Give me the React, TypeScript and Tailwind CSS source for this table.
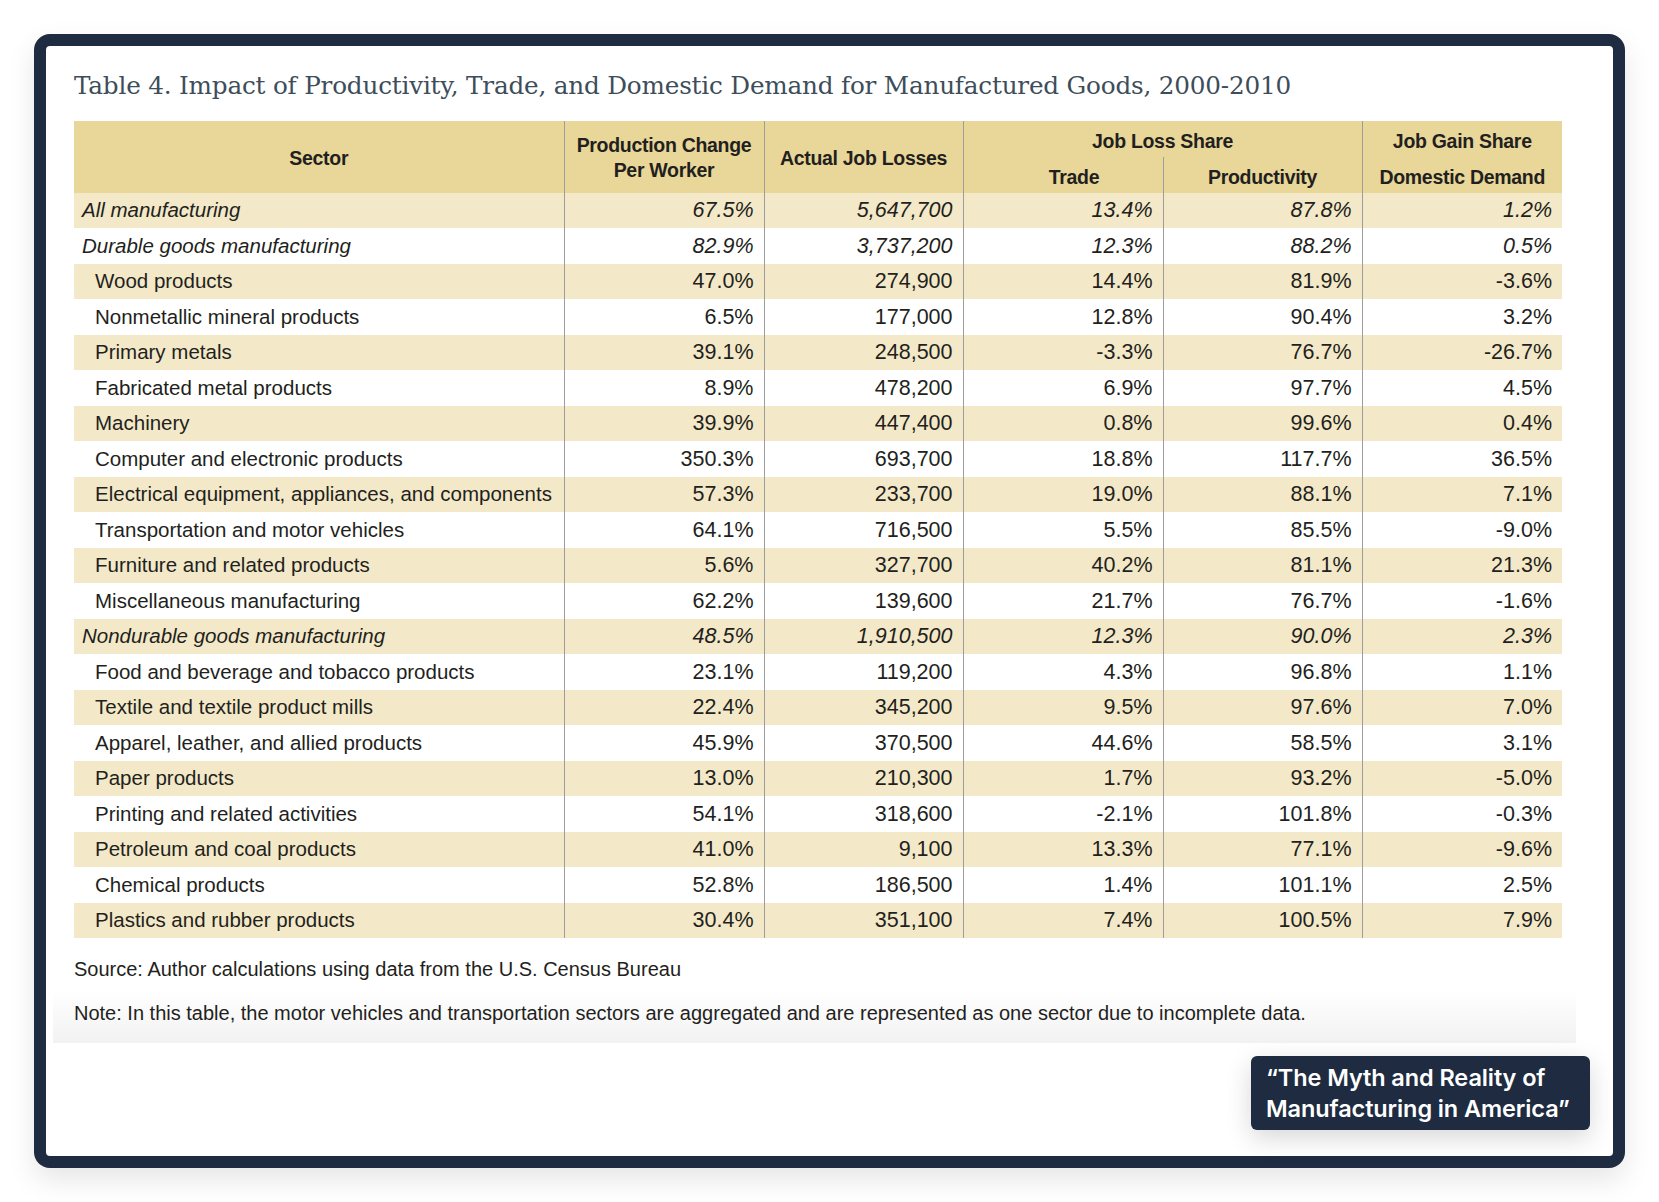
import React from 'react';

type Row = {
  sector: string;
  values: string[];
  group?: boolean;
};

const rows: Row[] = [
  { sector: 'All manufacturing', values: ['67.5%', '5,647,700', '13.4%', '87.8%', '1.2%'], group: true },
  { sector: 'Durable goods manufacturing', values: ['82.9%', '3,737,200', '12.3%', '88.2%', '0.5%'], group: true },
  { sector: 'Wood products', values: ['47.0%', '274,900', '14.4%', '81.9%', '-3.6%'] },
  { sector: 'Nonmetallic mineral products', values: ['6.5%', '177,000', '12.8%', '90.4%', '3.2%'] },
  { sector: 'Primary metals', values: ['39.1%', '248,500', '-3.3%', '76.7%', '-26.7%'] },
  { sector: 'Fabricated metal products', values: ['8.9%', '478,200', '6.9%', '97.7%', '4.5%'] },
  { sector: 'Machinery', values: ['39.9%', '447,400', '0.8%', '99.6%', '0.4%'] },
  { sector: 'Computer and electronic products', values: ['350.3%', '693,700', '18.8%', '117.7%', '36.5%'] },
  { sector: 'Electrical equipment, appliances, and components', values: ['57.3%', '233,700', '19.0%', '88.1%', '7.1%'] },
  { sector: 'Transportation and motor vehicles', values: ['64.1%', '716,500', '5.5%', '85.5%', '-9.0%'] },
  { sector: 'Furniture and related products', values: ['5.6%', '327,700', '40.2%', '81.1%', '21.3%'] },
  { sector: 'Miscellaneous manufacturing', values: ['62.2%', '139,600', '21.7%', '76.7%', '-1.6%'] },
  { sector: 'Nondurable goods manufacturing', values: ['48.5%', '1,910,500', '12.3%', '90.0%', '2.3%'], group: true },
  { sector: 'Food and beverage and tobacco products', values: ['23.1%', '119,200', '4.3%', '96.8%', '1.1%'] },
  { sector: 'Textile and textile product mills', values: ['22.4%', '345,200', '9.5%', '97.6%', '7.0%'] },
  { sector: 'Apparel, leather, and allied products', values: ['45.9%', '370,500', '44.6%', '58.5%', '3.1%'] },
  { sector: 'Paper products', values: ['13.0%', '210,300', '1.7%', '93.2%', '-5.0%'] },
  { sector: 'Printing and related activities', values: ['54.1%', '318,600', '-2.1%', '101.8%', '-0.3%'] },
  { sector: 'Petroleum and coal products', values: ['41.0%', '9,100', '13.3%', '77.1%', '-9.6%'] },
  { sector: 'Chemical products', values: ['52.8%', '186,500', '1.4%', '101.1%', '2.5%'] },
  { sector: 'Plastics and rubber products', values: ['30.4%', '351,100', '7.4%', '100.5%', '7.9%'] },
];

export default function App() {
  return (
    <div className="min-h-screen bg-white pt-[34px] px-[34px] font-['Liberation_Sans',Arial,sans-serif] text-[#231f20]">
      <div className="rounded-[16px] bg-[#1e2b40] p-[12px] shadow-[0_12px_28px_rgba(0,0,0,0.10)]">
        <div className="rounded-[4px] bg-white pt-[24px] pb-[26px] pl-[7px] pr-[37px]">
          <div className="px-[21px]">
            <h2 className="font-['DejaVu_Serif',serif] text-[24.7px] leading-[32px] text-[#3d4d5a] tracking-[-0.2px]">
              Table 4. Impact of Productivity, Trade, and Domestic Demand for Manufactured Goods, 2000-2010
            </h2>

            <table className="mt-[18.6px] w-[1488px] table-fixed border-collapse">
              <colgroup>
                <col className="w-[490px]" />
                <col className="w-[200px]" />
                <col className="w-[199px]" />
                <col className="w-[200px]" />
                <col className="w-[199px]" />
                <col className="w-[200px]" />
              </colgroup>
              <thead className="bg-[#e8d798] text-[19.5px] font-bold leading-[25px] tracking-[-0.3px] text-[#231f20]">
                <tr className="h-[36px]">
                  <th rowSpan={2} className="pt-[3px] text-center align-middle">Sector</th>
                  <th rowSpan={2} className="border-l border-[#9d9d9d] pt-[3px] text-center align-middle">
                    Production Change
                    <br />
                    Per Worker
                  </th>
                  <th rowSpan={2} className="border-l border-[#9d9d9d] pt-[3px] text-center align-middle">
                    Actual Job Losses
                  </th>
                  <th colSpan={2} className="border-l border-[#9d9d9d] pt-[5px] text-center align-middle">
                    Job Loss Share
                  </th>
                  <th className="border-l border-[#9d9d9d] pt-[5px] text-center align-middle">Job Gain Share</th>
                </tr>
                <tr className="h-[36px]">
                  <th className="border-l border-[#9d9d9d] pl-[22px] pt-[5px] text-center align-middle">Trade</th>
                  <th className="border-l border-[#9d9d9d] pt-[5px] text-center align-middle">Productivity</th>
                  <th className="border-l border-[#9d9d9d] pt-[5px] text-center align-middle">Domestic Demand</th>
                </tr>
              </thead>
              <tbody className="text-[20.5px] leading-[24px]">
                {rows.map((row, i) => (
                  <tr key={row.sector} className={`h-[35.5px] ${i % 2 === 0 ? 'bg-[#f3e9c8]' : 'bg-white'} ${row.group ? 'italic' : ''}`}>
                    <td className={`${row.group ? 'pl-[8px]' : 'pl-[21px]'} align-middle whitespace-nowrap`}>{row.sector}</td>
                    {row.values.map((v, j) => (
                      <td key={j} className="border-l border-[#9d9d9d] pr-[10px] text-right align-middle text-[21.5px]">
                        {v}
                      </td>
                    ))}
                  </tr>
                ))}
              </tbody>
            </table>

            <p className="mt-[16.5px] text-[20px] leading-[28px]">
              Source: Author calculations using data from the U.S. Census Bureau
            </p>
          </div>

          <div className="mt-[7px] h-[53px] bg-gradient-to-b from-white to-[#f2f2f2] px-[21px] pt-[9.5px]">
            <p className="text-[20px] leading-[28px]">
              Note: In this table, the motor vehicles and transportation sectors are aggregated and are represented as one sector due to incomplete data.
            </p>
          </div>

          <div className="mt-[13px] flex justify-end">
            <div className="-mr-[14px] w-[339px] whitespace-nowrap rounded-[6px] bg-[#1e2b40] pl-[15px] py-[6px] font-['Inter',sans-serif] text-[23.5px] font-semibold leading-[31px] tracking-[-0.1px] text-white shadow-[0_8px_26px_rgba(0,0,0,0.16)]">
              “The Myth and Reality of
              <br />
              Manufacturing in America”
            </div>
          </div>
        </div>
      </div>
    </div>
  );
}
